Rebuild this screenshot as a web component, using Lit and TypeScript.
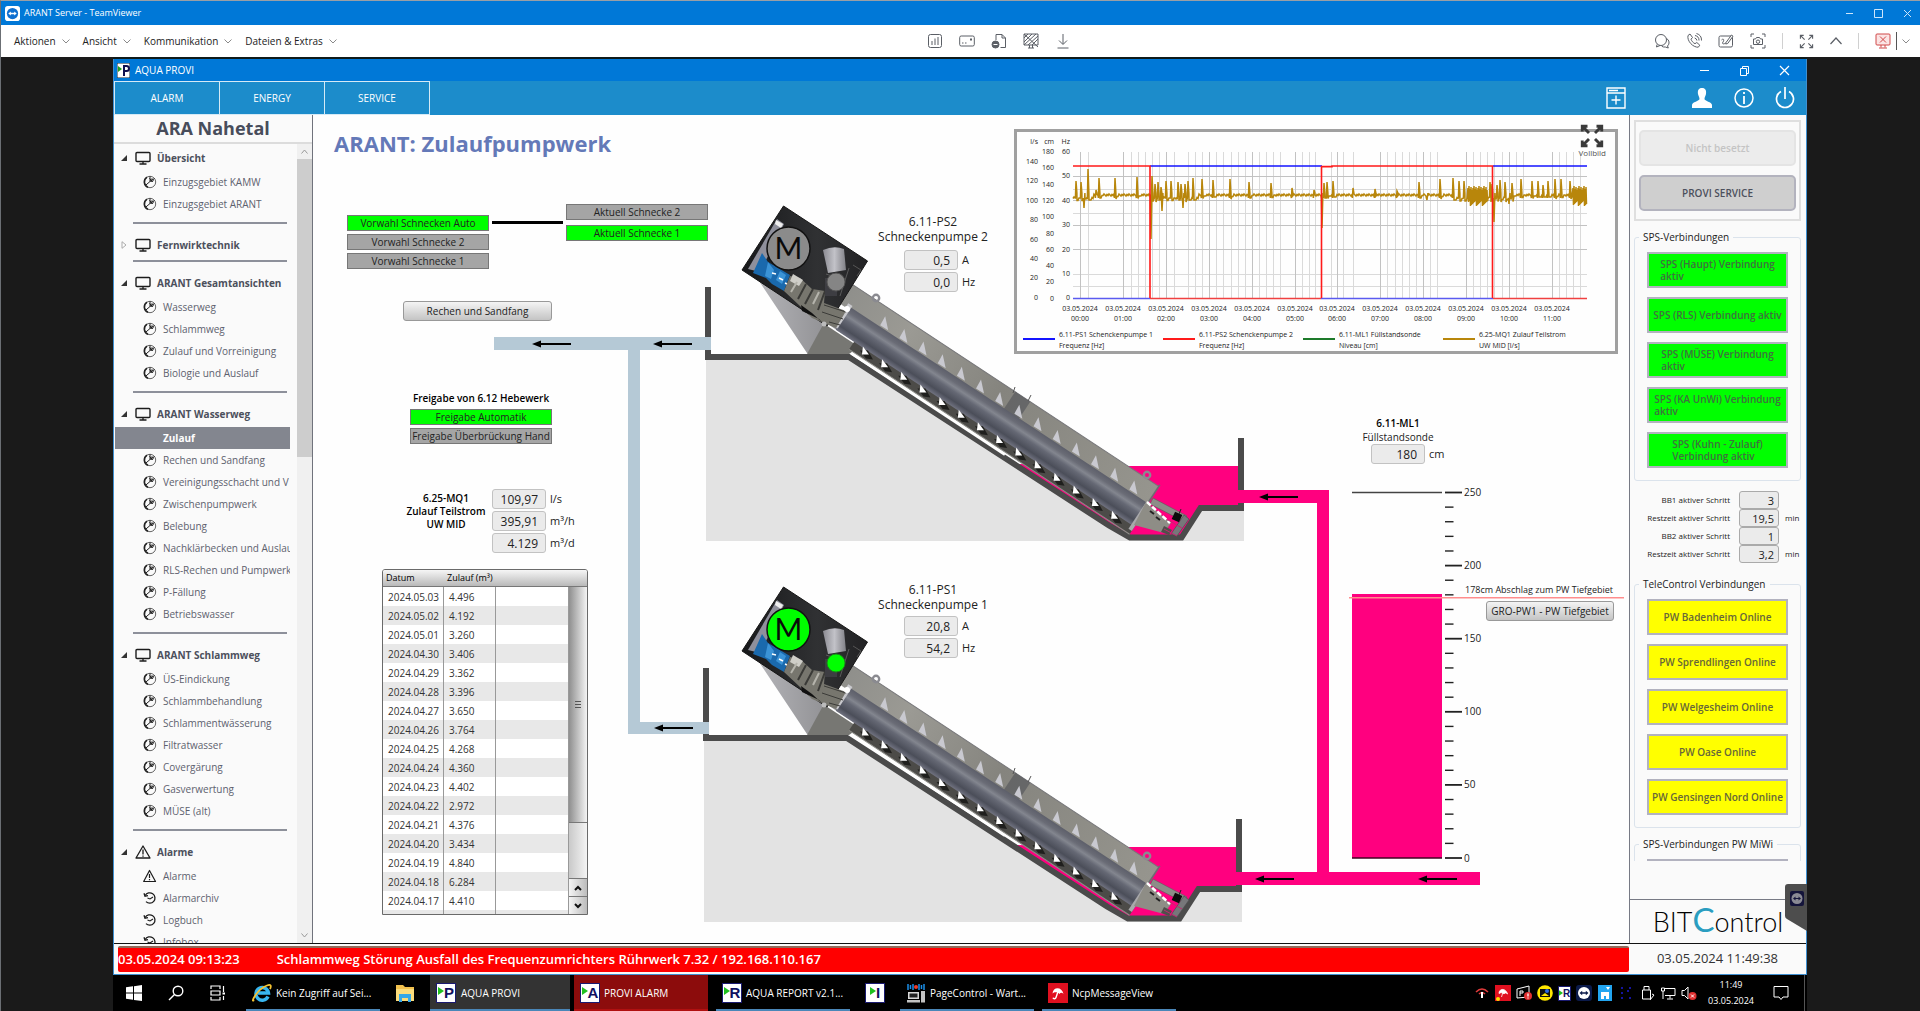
import { LitElement, html, css, svg, nothing } from "lit";
import { customElement, state } from "lit/decorators.js";
import { classMap } from "lit/directives/class-map.js";
import { styleMap } from "lit/directives/style-map.js";

/* ---------- icons ---------- */

const monitorIcon = html`<svg class="ico" width="16" height="14" viewBox="0 0 16 14" fill="none" stroke="#1c1c1c">
  <rect x="1" y="1.5" width="14" height="9" rx="1" stroke-width="1.4" /><path d="M8 10.5v2.5M4.500 13h7" stroke-width="1.300" /></svg>`;

const warnIcon = html`<svg class="ico" width="16" height="14" viewBox="0 0 16 14" fill="none" stroke="#1c1c1c" stroke-width="1.300" stroke-linejoin="round">
  <path d="M8 1L15 13H1Z" /><path d="M8 4.500v5M8 10.500v1.200" /></svg>`;

const warnSmall = html`<svg class="ico" width="14" height="14" viewBox="0 0 14 14" fill="none" stroke="#1c1c1c" stroke-width="1.200" stroke-linejoin="round">
  <path d="M6.500 1.500L12.500 12.500H.7Z" /><path d="M6.500 5v4M6.500 10v1.200" /></svg>`;

const pageIcon = html`<svg class="ico" width="14" height="14" viewBox="0 0 14 14" fill="none" stroke="#222">
  <circle cx="7" cy="7" r="5.700" stroke-width=".9" stroke="#555" />
  <path d="M4 2.200A5.700 5.700 0 0 0 5 12.300" stroke-width="1.600" />
  <path d="M7 1.300V6.500L2.300 10.500M7 6.500L11.500 3.500M6.500 3.300l3 3.600" stroke-width="1" />
  <circle cx="9" cy="5.200" r="1.300" stroke-width=".9" /></svg>`;

const historyIcon = html`<svg class="ico" width="14" height="14" viewBox="0 0 14 14" fill="none" stroke="#1c1c1c" stroke-width="1.300">
  <path d="M2.200 4.500A5.200 5.200 0 1 1 3 10.600" /><path d="M1 2.200l1 3 3-.6" /><path d="M4.500 7l2.500 1 3-2" stroke-width="1.100" /></svg>`;

const letterIcon = (letter: string) => html`<span class="letter"><svg width="6" height="8" viewBox="0 0 6 8"><path d="M0 0L6 4L0 8Z" fill="#1fc01f" /></svg><b>${letter}</b></span>`;

const chevron = html`<svg width="8" height="5" viewBox="0 0 8 5" fill="none" stroke="#8a8a8a"><path d="M.5.5L4 4L7.500.5" /></svg>`;

const tvMark = (size: number, bg: string, fg: string) => html`<svg width=${size} height=${size} viewBox="0 0 16 16">
  <rect width="16" height="16" rx="3" fill=${bg} /><circle cx="8" cy="8" r="6" fill=${fg} />
  <path d="M3.500 8L6.200 5.800V7.300H9.800V5.800L12.500 8L9.800 10.200V8.700H6.200V10.200Z" fill=${bg} /></svg>`;

const toolIcons = [
  { name: "Dashboard", art: svg`<rect x="1.500" y="1.500" width="13" height="13" rx="2" /><path d="M5 12V8M8 12V5.500M11 12V4" />` },
  { name: "Karte", art: svg`<rect x=".7" y="3" width="14.600" height="10" rx="1.500" /><path d="M3 10h1.500M6 10h1.500" /><path d="M11 6.500h2" stroke-width="2" />` },
  { name: "Dateiübertragung", art: svg`<path d="M5 7V1.500h6l3.500 3.500v9.500h-5" /><path d="M11 1.500V5h3.500" /><circle cx="4.500" cy="11.500" r="3.500" fill="#5b5f66" /><path d="M2.500 11.500h4" stroke="#fff" />` },
  { name: "Bildschirm schwärzen", art: svg`<path d="M1 1h14v11H1zM5 15h6M6.500 12v3M9.500 12v3M1 5l4-4M1 9l8-8M1 12L13 1M5 12L15 3M9 12l6-6M1 1l14 13" />` },
  { name: "Download", art: svg`<path d="M8 1v10M4 7.500L8 11.500L12 7.500M2.500 15h11" />` },
];

const rightIcons = [
  { name: "Chat", art: svg`<circle cx="7" cy="7" r="5.500" /><path d="M3 11.500L2.500 14L6 12.500M12.500 5.500a4.500 4.500 0 0 1 1 7.500l.8 2l-3-1a5 5 0 0 1-3.500-.7" />` },
  { name: "Anruf", art: svg`<path d="M2 2.500l2-1.500l2.500 3.500l-1.500 1.700c.7 2 2 3.400 4 4.500l1.800-1.200l3 2.700l-1.500 2C7 14.500.8 8 2 2.500zM9 2.500a5 5 0 0 1 4 5M10.500.5a7 7 0 0 1 5 7M8.700 5a3 3 0 0 1 2.200 2.500" />` },
  { name: "Whiteboard", art: svg`<rect x="1" y="3" width="13.500" height="11" rx="1.500" /><path d="M3.500 7c2-2 3 0 1.500 2s1 2.500 2.500 1M8 9.500L13.500 2l1.500 1.200L9.700 10.500L7.700 11z" fill="#fff" />` },
  { name: "Bildschirmfoto", art: svg`<path d="M1 4V1h3M12 1h3v3M15 12v3h-3M4 15H1v-3" /><path d="M3.500 6h2l1-1.500h3l1 1.500h2v5.500h-9z" /><circle cx="8" cy="8.700" r="1.700" />` },
];

const fullArrows = svg`<path d="M1.500 5V1.500H5M1.500 1.500L6 6M11 1.500h3.500V5M14.500 1.500L10 6M1.500 11v3.500H5M1.500 14.500L6 10M14.500 11v3.500H11M14.500 14.500L10 10" />`;

/* ---------- data ---------- */

interface Group { title: string; kind: "monitor" | "warn"; open: boolean; items: string[]; }

const GROUPS: Group[] = [
  { title: "Übersicht", kind: "monitor", open: true, items: ["Einzugsgebiet KAMW", "Einzugsgebiet ARANT"] },
  { title: "Fernwirktechnik", kind: "monitor", open: false, items: [] },
  { title: "ARANT Gesamtansichten", kind: "monitor", open: true, items: ["Wasserweg", "Schlammweg", "Zulauf und Vorreinigung", "Biologie und Auslauf"] },
  { title: "ARANT Wasserweg", kind: "monitor", open: true, items: ["Zulauf", "Rechen und Sandfang", "Vereinigungsschacht und V", "Zwischenpumpwerk", "Belebung", "Nachklärbecken und Auslauf", "RLS-Rechen und Pumpwerk", "P-Fällung", "Betriebswasser"] },
  { title: "ARANT Schlammweg", kind: "monitor", open: true, items: ["ÜS-Eindickung", "Schlammbehandlung", "Schlammentwässerung", "Filtratwasser", "Covergärung", "Gasverwertung", "MÜSE (alt)"] },
  { title: "Alarme", kind: "warn", open: true, items: ["Alarme", "Alarmarchiv", "Logbuch", "Infobox"] },
];

const INFLOW: [string, string][] = [
  ["2024.05.03", "4.496"], ["2024.05.02", "4.192"], ["2024.05.01", "3.260"], ["2024.04.30", "3.406"],
  ["2024.04.29", "3.362"], ["2024.04.28", "3.396"], ["2024.04.27", "3.650"], ["2024.04.26", "3.764"],
  ["2024.04.25", "4.268"], ["2024.04.24", "4.360"], ["2024.04.23", "4.402"], ["2024.04.22", "2.972"],
  ["2024.04.21", "4.376"], ["2024.04.20", "3.434"], ["2024.04.19", "4.840"], ["2024.04.18", "6.284"],
  ["2024.04.17", "4.410"],
];

const SPS = ["SPS (Haupt) Verbindung\naktiv", "SPS (RLS) Verbindung aktiv", "SPS (MÜSE) Verbindung\naktiv", "SPS (KA UnWi) Verbindung\naktiv", "SPS (Kuhn - Zulauf)\nVerbindung aktiv"];
const TELE = ["PW Badenheim Online", "PW Sprendlingen Online", "PW Welgesheim Online", "PW Oase Online", "PW Gensingen Nord Online"];
const STEPS = [
  { label: "BB1 aktiver Schritt", value: "3", unit: "" },
  { label: "Restzeit aktiver Schritt", value: "19,5", unit: "min" },
  { label: "BB2 aktiver Schritt", value: "1", unit: "" },
  { label: "Restzeit aktiver Schritt", value: "3,2", unit: "min" },
];

/* ---------- trend chart ---------- */

const PLOT = { left: 59, right: 573, top: 23, bottom: 169 };

/* [x, y] of the peaks and dips of the flow curve, inside the plot */
const FLOW: [number, number][] = [
  [62, 52], [67, 53], [70, 79], [74, 40], [82, 61], [85, 49], [101, 49], [123, 48], [137, 110], [138, 47], [141, 55],
  [144, 53], [147, 58], [148, 82], [152, 52], [157, 52], [164, 53], [167, 55], [169, 79], [171, 55], [174, 52], [179, 49],
  [188, 50], [199, 51], [216, 50], [235, 53], [257, 54], [278, 59], [300, 61], [308, 99], [310, 54], [313, 53], [319, 52],
  [339, 59], [361, 60], [383, 62], [405, 53], [413, 71], [426, 50], [439, 49], [445, 52], [450, 52], [476, 53], [478, 55],
  [480, 93], [483, 56], [486, 51], [491, 53], [495, 75], [498, 54], [507, 50], [518, 52], [524, 52], [529, 56], [534, 52], [541, 50],
  [547, 50], [556, 52],
];
const BUSY: [number, number][] = [[454, 473], [559, 573]];

function flowPath(): string {
  const base = 66;
  const marks = new Map(FLOW);
  const out: string[] = [];
  let tail = 0;
  for (let x = PLOT.left; x <= PLOT.right - 1; x++) {
    const wobble = ((x * 37) % 5) * 0.5 - 1;
    const busy = BUSY.some(([a, b]) => x >= a && x <= b);
    if (busy) {
      out.push(`${x} ${57 + ((x * 13) % 5)}`, `${x + 0.5} ${77 - ((x * 7) % 6)}`);
      continue;
    }
    const m = marks.get(x);
    if (m !== undefined) {
      out.push(`${x - 0.6} ${base + 3}`, `${x} ${m}`, `${x + 0.9} ${base - 2}`);
      tail = m < base - 8 ? 3 : 0;
    } else {
      const rough = (x < 80 || (x > 137 && x < 185) || (x > 439 && x < 500)) ? 3 : 0;
      out.push(`${x} ${base + wobble + tail + rough}`);
      tail = Math.max(0, tail - 1);
    }
  }
  return "M" + out.join("L");
}

@customElement("trend-chart")
export class TrendChart extends LitElement {
  static styles = css`
    :host { display: block; }
    .panel { position: relative; border: 3px solid #a0a0a0; background: #fefefe; }
    .plot { display: block; margin: -3px; }
    text { font: 7px "Open Sans", "Noto Sans", sans-serif; fill: #222; }
    .full { position: absolute; top: -8px; right: 9px; display: flex; flex-direction: column; align-items: center;
      border: 0; padding: 0; background: none; font: 8px/10px "Open Sans", "Noto Sans", sans-serif; color: #555; }
  `;

  render() {
    const major = Array.from({ length: 12 }, (_, i) => Math.round(66.3 + i * 42.85));
    const minor = [74, 117, 124, 131, 138, 145, 160, 174, 181, 188, 202, 209, 217, 224, 231, 245, 252, 259, 266, 288, 295, 301, 317, 329, 339,
      373, 381, 388, 395, 402, 416, 423, 459, 466, 473, 480, 488, 502, 509, 545, 552, 559, 566];
    const axis = (x: number, unit: string, values: number[], y0: number, step: number) => svg`
      <text x=${x} y="15" text-anchor="end">${unit}</text>
      ${values.map((v, i) => svg`<text x=${x} y=${y0 + i * step} text-anchor="end">${v}</text>`)}`;
    const legend: [string, string, string][] = [
      ["#1414ff", "6.11-PS1 Schenckenpumpe 1", "Frequenz [Hz]"],
      ["#ff1a1a", "6.11-PS2 Schenckenpumpe 2", "Frequenz [Hz]"],
      ["#1d7a2a", "6.11-ML1 Füllstandsonde", "Niveau [cm]"],
      ["#b8860b", "6.25-MQ1 Zulauf Teilstrom", "UW MID [l/s]"],
    ];
    return html`<div class="panel">
      <svg class="plot" width="604" height="225" viewBox="0 0 604 225" role="img" aria-label="Trend">
        <g stroke="#dadada">${minor.map((x) => svg`<path d="M${x}.5 23V169" />`)}</g>
        <g stroke="#dadada">${[60, 84, 145, 157].map((y) => svg`<path d="M59 ${y}.5H573" />`)}</g>
        <g stroke="#c2c2c2">${major.map((x) => svg`<path d="M${x}.5 23V169" />`)}
          ${[47, 71, 96, 120].map((y) => svg`<path d="M59 ${y}.5H573" />`)}</g>
        <path d=${flowPath()} fill="none" stroke="#b8860b" stroke-width="1.500" />
        <g fill="none" stroke-width="1.600">
          <path d="M59 169.500H136M307 169.500H479" stroke="#5a5af0" stroke-width="1.300" />
          <path d="M136 169.500H307M479 169.500H573" stroke="#f04040" stroke-width="1.300" />
          <path d="M136 37H308M479 37H573" stroke="#1414ff" />
          <path d="M59 37H136V169M307.500 169V37.600H318V37H478.500V169" stroke="#ff1a1a" />
        </g>
        ${axis(24, "l/s", [140, 120, 100, 80, 60, 40, 20, 0], 35, 19.4)}
        ${axis(40, "cm", [180, 160, 140, 120, 100, 80, 60, 40, 20, 0], 25, 16.3)}
        ${axis(56, "Hz", [60, 50, 40, 30, 20, 10, 0], 25, 24.4)}
        ${major.map((x, i) => svg`<text x=${x} y="182" text-anchor="middle">03.05.2024</text>
          <text x=${x} y="192" text-anchor="middle">${String(i).padStart(2, "0")}:00</text>`)}
        ${legend.map(([c, a, b], i) => svg`<path d="M${9 + i * 140} 210h32" stroke=${c} stroke-width="2" />
          <text x=${45 + i * 140} y="208">${a}</text><text x=${45 + i * 140} y="219">${b}</text>`)}
      </svg>
      <button class="full"><svg width="24" height="24" viewBox="0 0 16 16" fill="none" stroke="#3a3a3a" stroke-width="1.900">${fullArrows}</svg>Vollbild</button>
    </div>`;
  }
}

/* ---------- process diagram artwork ---------- */

const COS = 0.835;
const SIN = 0.55;
/* point on the screw axis frame (u along the tube, v across it) in scene units */
const at = (u: number, v: number): [number, number] => [850 + u * COS - v * SIN, 308 + u * SIN + v * COS];

const pit = (dx: number, dy: number) => svg`<g transform="translate(${dx} ${dy})">
  <path d="M706 358H849L1109 526L1129 538H1183L1202 509H1244V541H706Z" fill="#e3e3e3" />
  <path d="M1018 464L1128 466H1239V506H1199L1181 536H1129L1108 524Z" fill="#ff007f" />
  <path d="M708 287V357H849L1109 525.500L1130 537.500H1181.500L1200.500 508H1241V438" fill="none" stroke="#4b4b4b" stroke-width="6" />
</g>`;

const pump = (dy: number, on: boolean) => {
  const steps = Array.from({ length: 14 }, (_, i) => i);
  return svg`<g transform="translate(0 ${dy})">
    <path d="M757 278L807 353H849L860 320L823 320Z" fill="url(#plate)" />
    <path d="M824 323L807 354H849L862 345Z" fill="#777773" />
    <g transform="translate(850 308) rotate(33.400)">
      <rect x="-12" y="-21" width="368" height="23" fill="url(#trough)" />
      <path d="M-12 -21H356" stroke="#77777a" stroke-width="1" />
      <rect x="184" y="-21" width="18" height="21" fill="#55565a" opacity=".65" />
      <rect x="22" y="23" width="336" height="12" fill="#4c4b48" />
      <path d="M22 35H358" stroke="#8d8d88" stroke-width="1" />
      <path d="M-13 26.500H22" stroke="#fff" stroke-width="2" />
      <path d="M26 37.300H210" stroke="#fff" stroke-width="2.400" />
      <rect x="0" y="-1" width="357" height="27" fill="url(#tube)" />
      <rect x="-4" y="-3" width="5" height="27" fill="#c9c9cd" />
      <path d="M356 -23V0" stroke="#6d6d70" stroke-width="1.500" />
      <rect x="354" y="-2" width="4" height="33" fill="#a9a9ac" />
    </g>
    ${steps.map((i) => {
      const [x, y] = at(37 + i * 22.95, -6);
      const [a, b] = at(37 + i * 22.95, 29);
      return svg`<path d="M${x + 1} ${y - 7}L${x + 4} ${y + 7}L${x - 4} ${y + 2}Z" fill="#c9c9d0" />
        <path d="M${a - 5} ${b - 2}L${a + 1} ${b + 6}L${a + 8} ${b + 7}L${a + 3} ${b - 2}Z" fill="#1f1f1d" />
        <path d="M${a - 2} ${b - 6}L${a + 4} ${b + 2}L${a - 3} ${b + 2}Z" fill="#fff" />`;
    })}
    <path d="M1015 387L1013 393M1031 395L1028 401" stroke="#555" />
    <g fill="none" stroke="#8a8a90" stroke-width="2.400"><circle cx="876" cy="298" r="3.200" /><circle cx="1147" cy="475" r="3.200" /></g>
    <path d="M783.500 206L867.500 261L827 326L742 270Z" fill="url(#box)" stroke="#161616" />
    <path d="M777 219L784 224L760 272L748 269Z" fill="#8f909c" />
    <path d="M776 220l7 4l-2 4l-6-4z" fill="#eee" />
    <path d="M762 253L768 262L790 275L784 291L772 284L766 278L753 273Z" fill="#1a69ad" />
    <path d="M768 262l6 8l-3 9l-6-3zM780 271l6 4l-4 9l-6-4z" fill="#3b93d6" />
    <path d="M772 273l4 1M779 278l4 2M785 283l4 2" stroke="#fff" stroke-width="1.500" />
    <path d="M784 291L790 276L800 278L812 289L825 291L824 303L846 311L836 328L812 318L800 306Z" fill="#77766e" />
    <path d="M793 274l10 6l-4 6l-9-5z" fill="#cfcec8" />
    <path d="M806 284l-8 15M813 289l-8 15M825 291l-7 19" stroke="#3a3a37" stroke-width="2" />
    <path d="M797 282l-6 10M819 292l-6 12" stroke="#b5b4ac" stroke-width="2" />
    <path d="M801 305L812 313L826 326L819 319L802 311Z" fill="#111" />
    <path d="M824 305L846 312M822 312L843 319M829 322L840 325" stroke="#3b3b38" />
    <path d="M823 250Q834 245 844 249L846 270L828 273Z" fill="url(#can)" />
    <path d="M826 274l12 4M849 268l-9 28" stroke="#666" stroke-width=".8" />
    <path d="M825 278h12v18h-12z" fill="#3d3d42" />
    <path d="M853 265l8 5l-4 6" fill="none" stroke="#555" />
    <circle cx="836" cy="282" r="9" fill=${on ? "#00ff00" : "#858585"} stroke=${on ? "#1a8a1a" : "#555"} />
    <circle cx="788.500" cy="248.500" r="21.500" fill=${on ? "#00ff00" : "#8b8b8b"} stroke="#111" stroke-width="1.500" />
    <text x="788.500" y="259" class="motor">M</text>
    <circle cx="847" cy="309" r="3" fill="#fff" /><circle cx="824" cy="324" r="2.500" fill="#bbb" />
    <path d="M1153 498L1187 516L1183 521L1150 504Z" fill="#8d8d88" stroke="#5c5c5a" stroke-width=".6" />
    <path d="M1146 502L1171 523L1164 533L1134 525Z" fill="#8e8d86" />
    <path d="M1147 502L1170 523" stroke="#fff" stroke-width="2.500" stroke-dasharray="5 2" />
    <path d="M1150 511l4 3M1156 517l4 3" stroke="#222" stroke-width="2" />
    <path d="M1164 526l8 4l-3 5l-8-3z" fill="#504f4b" />
    <path d="M1184 515l5 4l-12 17l-6-2z" fill="#77777a" stroke="#4f4f52" stroke-width=".7" />
    <path d="M1168 520l14 8M1164 529l13 7" stroke="#c02a70" />
    <rect x="1173" y="513" width="8" height="8" fill="#0c0c0c" transform="rotate(25 1177 517)" /><path d="M1179 514l2-5" stroke="#222" />
  </g>`;
};

const arrow = (x: number, y: number) => svg`<path d="M${x} ${y}l9-3.500v7z" fill="#000" /><path d="M${x + 6} ${y}h33" stroke="#000" stroke-width="1.800" />`;

const scene = () => svg`
  <defs>
    <linearGradient id="tube" x1="0" y1="0" x2="0" y2="1"><stop offset="0" stop-color="#5d5f6a" /><stop offset=".2" stop-color="#6a6c76" /><stop offset=".35" stop-color="#83868f" /><stop offset=".5" stop-color="#656874" /><stop offset=".8" stop-color="#4b4e59" /><stop offset="1" stop-color="#707280" /></linearGradient>
    <linearGradient id="trough"><stop offset="0" stop-color="#8f8f8b" /><stop offset=".2" stop-color="#9b9a94" /><stop offset=".5" stop-color="#85847e" /><stop offset="1" stop-color="#96958e" /></linearGradient>
    <linearGradient id="plate"><stop offset="0" stop-color="#b4b4b8" /><stop offset="1" stop-color="#818184" /></linearGradient>
    <linearGradient id="box"><stop offset="0" stop-color="#17181a" /><stop offset=".6" stop-color="#303133" /><stop offset="1" stop-color="#222224" /></linearGradient>
    <linearGradient id="can"><stop offset="0" stop-color="#8b8b92" /><stop offset=".5" stop-color="#c2c2c8" /><stop offset="1" stop-color="#808086" /></linearGradient>
  </defs>
  ${pit(0, 0)}${pit(-2, 381)}
  <path d="M494 337H711V350H640V722H709V734H628V350H494Z" fill="#b5c9d6" />
  <path d="M1238 490H1329V872H1480V885H1236V872H1317V503H1238Z" fill="#ff007f" />
  ${pump(0, false)}${pump(381, true)}
  ${arrow(532, 344)}${arrow(653, 344)}${arrow(654, 728)}${arrow(1259, 497)}${arrow(1255, 879)}${arrow(1418, 879)}
  <path d="M492 222.500H563" stroke="#000" stroke-width="3" />
  <rect x="1352" y="594" width="90" height="264" fill="#ff007f" />
  <path d="M1352 858H1442" stroke="#400020" stroke-width="1.500" /><path d="M1352 492.500H1442" stroke="#444" stroke-width="1.500" />
  ${Array.from({ length: 26 }, (_, i) => {
    const y = 858 - i * 14.62;
    const big = i % 5 === 0;
    return svg`<path d="M1445 ${y}h${big ? 17 : 8.5}" stroke="#222" stroke-width=${big ? 1.8 : 1.4} />
      ${big ? svg`<text x="1464" y=${y + 3.5} class="tick">${i * 10}</text>` : nothing}`;
  })}
  <path d="M1349 597.700H1624" stroke="#ff8d8d" stroke-width="1.500" />
`;

/* ---------- application ---------- */

const place = (x: number, y: number) => styleMap({ left: `${x - 313}px`, top: `${y - 115}px` });

@customElement("app-root")
export class AppRoot extends LitElement {
  @state() private selected = "Zulauf";

  static styles = css`
    :host { display: block; font: 10px/14px "Open Sans", "Noto Sans", sans-serif; color: #222; }
    * { box-sizing: border-box; }
    button { font: inherit; color: inherit; border: 0; background: none; padding: 0; }
    a { color: inherit; text-decoration: none; }
    svg { flex: none; }
    .screen { height: 100vh; display: flex; flex-direction: column; background: #1a1a1a; border-top: 1px solid #9a9fa5; border-left: 1px solid #6b6f74; overflow: hidden; }

    .titlebar { display: flex; align-items: center; height: 24px; padding: 0 8px 0 4px; gap: 4px; background: #0078d7; color: #fff; font-size: 9px; }
    .titlebar .name { flex: 1; }
    .wins { display: flex; gap: 20px; }
    .menubar { display: flex; align-items: center; height: 32px; background: #fff; padding: 0 10px 0 13px; }
    .menus { flex: 1; display: flex; gap: 13px; }
    .menus button { display: flex; align-items: center; gap: 6px; }
    .tools { display: flex; gap: 16px; padding-left: 73px; }
    .actions { flex: 1; display: flex; justify-content: flex-end; align-items: center; gap: 16px; }
    .tools button, .actions button { display: flex; }
    .line { width: 1px; height: 16px; background: #d0d0d0; }
    .exit { display: flex; align-items: center; gap: 5px; }
    .exit .line { background: #555; height: 18px; }

    .desktop { position: relative; flex: 1; min-height: 0; margin: 0 113px 0 112px; display: flex; flex-direction: column; border-top: 2px solid #0e1a1a; }
    .window { flex: 1; min-height: 0; display: flex; flex-direction: column; border: 1px solid #3f8fd0; border-top: 0; background: #fefefe; }
    .apptitle { display: flex; align-items: center; height: 22px; gap: 5px; padding: 0 16px 0 3px; background: #0078d7; color: #fff; }
    .apptitle .name { flex: 1; }
    .apptitle .wins { gap: 29px; }
    .ribbon { display: flex; height: 34px; background: #1c8ccb; color: #fff; }
    .ribbon .tabs { display: flex; flex: 1; }
    .ribbon .tabs button { width: 106px; border: 1px solid #d5eaf6; margin-right: -1px; }
    .quick { display: flex; align-items: center; padding-right: 11px; gap: 20px; }
    .quick button { display: flex; }
    .quick .add { margin-right: 45px; }

    .body { flex: 1; min-height: 0; display: flex; }
    .side { width: 199px; flex: none; display: flex; flex-direction: column; background: #fafafa; border-right: 1px solid #70737c; color: #5d616e; }
    .side h1 { margin: 0; height: 29px; font-size: 18px; line-height: 27px; text-align: center; border-bottom: 2px solid #dcdcdc; color: #484d5b; }
    .sidebody { flex: 1; min-height: 0; display: flex; }
    .tree { flex: 1; min-width: 0; overflow: hidden; }
    .group { margin-top: 7px; }
    .group:first-child { margin-top: 0; }
    .ghead { display: flex; align-items: center; height: 27px; padding-left: 7px; font-weight: 700; color: #4c505c; width: 100%; }
    .ghead .tri { width: 14px; display: flex; }
    .ghead .ico { margin-right: 6px; }
    .tree ul { list-style: none; margin: 0; padding: 0; }
    .item { display: flex; align-items: center; height: 22px; padding-left: 29px; gap: 6px; margin-right: 7px; white-space: nowrap; overflow: hidden; }
    .item.on { background: #83868f; color: #fff; font-weight: 700; padding-left: 48px; margin-left: 1px; }
    .rule { border: 0; height: 2px; margin: 7px 10px 0 19px; background: #8d909a; }
    .group.closed .rule { margin-top: 2px; }
    .bar { width: 15px; display: flex; flex-direction: column; align-items: center; background: #f0f0f0; }
    .bar .thumb { width: 15px; height: 298px; background: #cdcdcd; }
    .bar svg { margin: 5px 0; }
    .bar .last { margin-top: auto; }

    .canvas { position: relative; flex: 1; min-width: 0; overflow: hidden; }
    .scene { position: absolute; left: 0; top: 0; }
    .motor { font-family: Lato, sans-serif; font-size: 30px; text-anchor: middle; fill: #0a0a0a; }
    .tick { font-size: 10px; fill: #222; }
    .at { position: absolute; }
    .canvas h2 { margin: 0; font-size: 22px; line-height: 28px; color: #6479b8; white-space: nowrap; }
    .tag { width: 142px; height: 16px; line-height: 14px; border: 1px solid #777; background: #a5a5a5; text-align: center; white-space: nowrap; }
    .tag.on { background: #00ff00; }
    .stack { display: flex; flex-direction: column; gap: 3px; }
    .stack.wide { gap: 5px; }
    .cmd { height: 20px; border: 1px solid #999; border-radius: 3px; background: linear-gradient(#f4f4f4, #c4c4c4); padding: 0 4px; white-space: nowrap; }
    .cmd.w { width: 149px; }
    .cmd.n { width: 128px; }
    .lab { text-align: center; white-space: nowrap; width: 150px; }
    .lab.big { font-size: 12px; line-height: 15px; }
    .lab.bold { font-weight: 600; color: #000; line-height: 13px; }
    .small { font-size: 8px; }
    .note { font-size: 9px; white-space: nowrap; }
    .fields { display: flex; flex-direction: column; gap: 2px; }
    .field { display: flex; align-items: center; gap: 4px; }
    .field input { width: 54px; height: 20px; padding: 0 7px; text-align: right; font: 12px "Open Sans", "Noto Sans", sans-serif; color: #222; border: 1px solid #c2c2c2; border-radius: 3px; background: #ebebeb; }
    .field label { font-size: 11px; }

    .grid { width: 206px; border: 1px solid #6a6a6a; border-radius: 3px 3px 0 0; height: 346px; overflow: hidden; background: #fff; }
    .gwrap { display: flex; align-items: flex-start; }
    .data { border-collapse: separate; border-spacing: 0; table-layout: fixed; width: 186px; }
    .data th { height: 17px; padding: 0 0 0 3px; font-weight: 400; font-size: 9px; line-height: 16px; text-align: left; background: linear-gradient(#f6f6f6, #b9b9b9); border-bottom: 1px solid #777; color: #000; white-space: nowrap; }
    .data td { height: 19px; padding: 0 0 0 5px; line-height: 18px; border-right: 1px solid #999; color: #333; }
    .data tbody tr:nth-child(even) { background: #e8e8e8; }
    .c1 { width: 61px; } .c2 { width: 52px; }
    .gbar { flex: 1; height: 344px; display: flex; flex-direction: column; }
    .gbar .cap { height: 17px; background: linear-gradient(#f6f6f6, #b9b9b9); border-bottom: 1px solid #777; }
    .gbar .gthumb { flex: 1; display: flex; align-items: center; justify-content: center; background: linear-gradient(90deg, #8f8f8f, #f4f4f4); border-bottom: 1px solid #777; }
    .gbar .rest { height: 55px; background: linear-gradient(90deg, #c9c9c9, #f4f4f4); }
    .gbar button { height: 18px; border-top: 1px solid #777; background: linear-gradient(90deg, #f4f4f4, #bcbcbc); display: flex; align-items: center; justify-content: center; }

    .right { width: 177px; flex: none; display: flex; flex-direction: column; background: #fafafa; border-left: 1px solid #777a85; }
    .scroll { flex: 1; min-height: 0; overflow: hidden; padding: 5px 5px 0 4px; margin-bottom: 38px; }
    .users { border: 2px solid #dfdfdf; padding: 8px 3px; display: flex; flex-direction: column; gap: 9px; }
    .users button { height: 36px; border: 2px solid #b3b3be; border-radius: 5px; background: #cfcfcf; font-weight: 600; color: #4c505c; }
    .users button:disabled { background: #ececec; border-color: #e4e4e4; color: #c4c4c4; }
    fieldset { margin: 9px 0 0; padding: 8px 12px 12px; border: 1px solid #dbe3ec; border-radius: 3px; min-width: 0; display: flex; flex-direction: column; gap: 9px; }
    legend { padding: 0 4px; margin-left: -8px; height: 14px; }
    .state { height: 36px; display: flex; align-items: center; justify-content: center; border: 2px solid #b2b2bf; background: #00ff00; color: #3f713f; font-weight: 600; line-height: 12px; text-align: left; white-space: pre; }
    .state.tele { background: #ffff00; color: #66663a; }
    .steps { margin-top: 10px; margin-bottom: 14px; }
    .step { display: flex; align-items: center; height: 18px; font-size: 8px; white-space: nowrap; }
    .step label { flex: 1; text-align: right; padding-right: 9px; }
    .step input { width: 40px; height: 18px; padding: 0 4px; text-align: right; font: 11px "Open Sans", "Noto Sans", sans-serif; border: 1px solid #aaa; border-radius: 3px; background: #ebebeb; color: #222; }
    .step span { width: 22px; padding-left: 6px; }
    .brand { height: 44px; border-top: 1px solid #777a85; display: flex; align-items: baseline; justify-content: center; font: 300 27px/38px Lato, "Open Sans", sans-serif; color: #000; }
    .brand b { font-weight: 400; font-size: 33px; color: #2a9dc0; }

    .foot { display: flex; height: 31px; border-top: 1px solid #111; background: #fafafa; font-size: 13px; }
    .alarm { flex: 1; margin: 2px 0 2px 4px; padding-bottom: 3px; display: flex; align-items: center; gap: 37px; background: #ff0000; border-top: 2px solid #8f6a5a; border-radius: 2px; color: #fff; font-weight: 600; white-space: nowrap; }
    .now { width: 177px; padding-bottom: 2px; display: flex; align-items: center; justify-content: center; color: #333; }

    .taskbar { display: flex; height: 36px; background: #000; color: #fff; align-items: stretch; }
    .sys { width: 42px; display: flex; align-items: center; justify-content: center; }
    .sys + .task { margin-left: 7px; }
    .task { width: 134px; display: flex; align-items: center; gap: 4px; padding-left: 6px; box-shadow: inset 0 -2px #4a86b8; margin-right: 8px; white-space: nowrap; }
    .task.slim { width: 42px; box-shadow: none; padding-left: 7px; margin-right: 0; }
    .task.active { background: #333; width: 140px; margin-right: 4px; gap: 5px; }
    .task.red { background: #8c0c0c; box-shadow: inset 0 -2px #b01010; }
    .letter { display: inline-flex; width: 20px; height: 20px; background: #fff; border: 1px solid #1a1a70; color: #101060; align-items: flex-start; justify-content: center; }
    .letter b { font: 700 15px/18px "Liberation Sans", sans-serif; }
    .letter svg { margin-top: 3px; }
    .letter.mini { width: 13px; height: 15px; }
    .letter.mini b { font-size: 10px; line-height: 14px; }
    .tray { margin-left: auto; display: flex; align-items: center; gap: 5px; }
    .clock { text-align: center; line-height: 16px; margin: 0 14px 0 6px; font-size: 9px; }
    .edge { width: 3px; height: 36px; margin-left: 10px; border-left: 1px solid #555; }
    .handle { position: absolute; right: 0; bottom: 80px; display: flex; }
  `;

  private tag(text: string, on = false) {
    return html`<div class=${classMap({ tag: true, on })}>${text}</div>`;
  }

  private field(id: string, value: string, unit: string) {
    return html`<div class="field"><input id=${id} readonly .value=${value} /><label for=${id}>${unit}</label></div>`;
  }

  private renderSide() {
    return html`<nav class="side">
      <h1>ARA Nahetal</h1>
      <div class="sidebody">
        <div class="tree">
          ${GROUPS.map((g, gi) => html`<section class=${classMap({ group: true, closed: !g.open })}>
            <button class="ghead">
              <span class="tri">${g.open
                ? html`<svg width="6" height="6" viewBox="0 0 6 6"><path d="M6 0V6H0Z" fill="#333" /></svg>`
                : html`<svg width="6" height="8" viewBox="0 0 6 8"><path d="M1 .7L5 4L1 7.300Z" fill="#fff" stroke="#aaa" /></svg>`}</span>
              ${g.kind === "warn" ? warnIcon : monitorIcon}${g.title}</button>
            <ul>${g.items.map((t, i) => {
              const on = t === this.selected;
              const icon = g.kind === "warn" ? (i === 0 ? warnSmall : historyIcon) : pageIcon;
              return html`<li><a href="#" class=${classMap({ item: true, on })} @click=${(e: Event) => { e.preventDefault(); this.selected = t; }}>${on ? nothing : icon}${t}</a></li>`;
            })}</ul>
            ${gi < GROUPS.length - 1 ? html`<hr class="rule" />` : nothing}
          </section>`)}
        </div>
        <div class="bar">
          <svg width="7" height="5" viewBox="0 0 7 5" fill="none" stroke="#999"><path d="M.5 4.500L3.500 1L6.500 4.500" /></svg>
          <div class="thumb"></div>
          <svg class="last" width="7" height="5" viewBox="0 0 7 5" fill="none" stroke="#999"><path d="M.5.5L3.500 4L6.500.5" /></svg>
        </div>
      </div>
    </nav>`;
  }

  private renderTable() {
    return html`<div class="at grid" style=${place(382, 569)}><div class="gwrap">
      <table class="data">
        <colgroup><col class="c1" /><col class="c2" /><col /></colgroup>
        <thead><tr><th>Datum</th><th>Zulauf (m³)</th><th></th></tr></thead>
        <tbody>${INFLOW.map(([d, v]) => html`<tr><td>${d}</td><td>${v}</td><td></td></tr>`)}<tr><td></td><td></td><td></td></tr></tbody>
      </table>
      <div class="gbar"><div class="cap"></div>
        <div class="gthumb"><svg width="6" height="7" viewBox="0 0 6 7"><path d="M0 .5h6M0 3.500h6M0 6.500h6" stroke="#555" /></svg></div>
        <div class="rest"></div>
        <button aria-label="Nach oben"><svg width="8" height="6" viewBox="0 0 8 6" fill="none" stroke="#111" stroke-width="2"><path d="M1 5L4 2L7 5" /></svg></button>
        <button aria-label="Nach unten"><svg width="8" height="6" viewBox="0 0 8 6" fill="none" stroke="#111" stroke-width="2"><path d="M1 1L4 4L7 1" /></svg></button>
      </div>
    </div></div>`;
  }

  private renderCanvas() {
    return html`<main class="canvas">
      <svg class="scene" width="1317" height="828" viewBox="313 115 1317 828">${scene()}</svg>
      <h2 class="at" style=${place(334, 129)}>ARANT: Zulaufpumpwerk</h2>
      <div class="at stack" style=${place(347, 215)}>${this.tag("Vorwahl Schnecken Auto", true)}${this.tag("Vorwahl Schnecke 2")}${this.tag("Vorwahl Schnecke 1")}</div>
      <div class="at stack wide" style=${place(566, 204)}>${this.tag("Aktuell Schnecke 2")}${this.tag("Aktuell Schnecke 1", true)}</div>
      <button class="at cmd w" style=${place(403, 301)}>Rechen und Sandfang</button>
      <div class="at lab bold" style=${place(406, 392)}>Freigabe von 6.12 Hebewerk</div>
      <div class="at stack" style=${place(410, 409)}>${this.tag("Freigabe Automatik", true)}${this.tag("Freigabe Überbrückung Hand")}</div>
      <div class="at lab bold" style=${place(371, 492)}>6.25-MQ1<br />Zulauf Teilstrom<br />UW MID</div>
      <div class="at fields" style=${place(492, 489)}>${this.field("ls", "109,97", "l/s")}${this.field("mh", "395,91", "m³/h")}${this.field("md", "4.129", "m³/d")}</div>
      ${this.renderTable()}
      <div class="at lab big" style=${place(858, 214)}>6.11-PS2<br />Schneckenpumpe 2</div>
      <div class="at fields" style=${place(904, 250)}>${this.field("a2", "0,5", "A")}${this.field("h2", "0,0", "Hz")}</div>
      <div class="at lab big" style=${place(858, 582)}>6.11-PS1<br />Schneckenpumpe 1</div>
      <div class="at fields" style=${place(904, 616)}>${this.field("a1", "20,8", "A")}${this.field("h1", "54,2", "Hz")}</div>
      <trend-chart class="at" style=${place(1014, 129)}></trend-chart>
      <div class="at lab bold" style=${place(1323, 417)}>6.11-ML1</div>
      <div class="at lab" style=${place(1323, 430)}>Füllstandsonde</div>
      <div class="at fields" style=${place(1371, 444)}>${this.field("cm", "180", "cm")}</div>
      <div class="at note" style=${place(1465, 583)}>178cm Abschlag zum PW Tiefgebiet</div>
      <button class="at cmd n" style=${place(1486, 601)}>GRO-PW1 - PW Tiefgebiet</button>
    </main>`;
  }

  private renderRight() {
    return html`<aside class="right">
      <div class="scroll">
        <div class="users"><button disabled>Nicht besetzt</button><button>PROVI SERVICE</button></div>
        <fieldset><legend>SPS-Verbindungen</legend>${SPS.map((t) => html`<button class="state">${t}</button>`)}</fieldset>
        <div class="steps">${STEPS.map((s, i) => html`<div class="step"><label for="s${i}">${s.label}</label><input id="s${i}" readonly .value=${s.value} /><span>${s.unit}</span></div>`)}</div>
        <fieldset><legend>TeleControl Verbindungen</legend>${TELE.map((t) => html`<button class="state tele">${t}</button>`)}</fieldset>
        <fieldset><legend>SPS-Verbindungen PW MiWi</legend><button class="state" aria-label="PW MiWi"></button></fieldset>
      </div>
      <div class="brand">BIT<b>C</b>ontrol</div>
    </aside>`;
  }

  private renderTaskbar() {
    const w = "#fff";
    return html`<footer class="taskbar">
      <button class="sys" aria-label="Start"><svg width="16" height="16" viewBox="0 0 16 16"><path d="M0 2.300L7 1.300V7.600H0zM8 1.200L16 0V7.600H8zM0 8.500H7V14.800L0 13.800zM8 8.500H16V16L8 14.900z" fill=${w} /></svg></button>
      <button class="sys" aria-label="Suche"><svg width="16" height="16" viewBox="0 0 16 16" fill="none" stroke=${w} stroke-width="1.400"><circle cx="10" cy="6" r="4.800" /><path d="M6.500 9.500L1 15" /></svg></button>
      <button class="sys" aria-label="Aufgabenansicht"><svg width="16" height="16" viewBox="0 0 16 16" fill="none" stroke=${w} stroke-width="1.200"><path d="M1 4V1h9v3M1 12v3h9v-3M1 6h9v4H1zM13.500 1v6M13.500 11v4" /><path d="M12.500 8.500h2.500" stroke-width="2" /></svg></button>
      <button class="task"><svg width="20" height="20" viewBox="0 0 20 20" fill="none"><path d="M16 13.500A6.300 6.300 0 1 1 16.500 10H6" stroke="#38b6f0" stroke-width="3.400" /><path d="M2 17C-2 21 5 6 15 2.500c4-1.500 4.500.5 3 3.500" stroke="#f5c332" stroke-width="1.800" /></svg>Kein Zugriff auf Sei...</button>
      <button class="task slim" aria-label="Explorer"><svg width="20" height="20" viewBox="0 0 20 20"><path d="M1 2h7l2 2h9v14H1z" fill="#f2c14e" /><path d="M1 6h18v12H1z" fill="#fbdc7c" /><path d="M4 19v-8h12v8h-3v-4H7v4z" fill="#35a7e8" /></svg></button>
      <button class="task active">${letterIcon("P")}AQUA PROVI</button>
      <button class="task red">${letterIcon("A")}PROVI ALARM</button>
      <button class="task">${letterIcon("R")}AQUA REPORT v2.1...</button>
      <button class="task slim" aria-label="AQUA INFO">${letterIcon("I")}</button>
      <button class="task"><svg width="20" height="20" viewBox="0 0 20 20"><path d="M2 1v6M4.500 2v4M7 1v6M13 1v6M15.500 2v4M18 1v6" stroke="#1b8fe8" stroke-width="1.500" /><circle cx="10" cy="4" r="2" fill="#f03a2a" /><path d="M2 9h11v7H2z" fill="#d9d9d9" /><path d="M3.500 10.500h8v4h-8z" fill="#222" /><path d="M1 17h13v2.500H1zM15 8h4v11.500h-4z" fill="#c2c2c2" /></svg>PageControl - Wart...</button>
      <button class="task"><svg width="20" height="20" viewBox="0 0 20 20"><path d="M0 0h20v20H0z" fill="#e01020" /><path d="M4.500 10.500C5 3.500 14 3.500 15.500 11c-1.500-1.800-3-1.800-4 0c-1.500-2-5-2.500-7-.5z" fill="#fff" /><path d="M10 8.500L8 14.500c-.5 1.500-2.500 1.700-3 .3" fill="none" stroke="#fff" stroke-width="1.400" /></svg>NcpMessageView</button>
      <div class="tray">
        <svg width="16" height="16" viewBox="0 0 16 16" fill="none"><path d="M2 7q6-6 12 0M5 9q3-3 6 0" stroke="#e03a3a" stroke-width="1.500" /><path d="M8 7v6" stroke="#fff" stroke-width="2" /></svg>
        <svg width="16" height="16" viewBox="0 0 16 16"><path d="M0 0h16v16H0z" fill="#e01020" /><path d="M4 8.500C4 3 11 3 12.500 9c-1.500-1.500-2.500-1.500-3.500 0C8 7.500 5.500 7.300 4 8.500zM8 7L6.500 12" fill="#fff" stroke="#fff" stroke-width=".8" /><circle cx="3" cy="14" r="2" fill="#ffe000" /></svg>
        <svg width="16" height="16" viewBox="0 0 16 16" fill="none"><path d="M1 4L13 1v11L1 13z" stroke="#fff" /><path d="M4 11V6h3v2H4" stroke="#fff" /><circle cx="12" cy="11" r="4" fill="#e03030" /><path d="M12 8.500v3M12 12.500v1" stroke="#fff" stroke-width="1.300" /></svg>
        <svg width="16" height="16" viewBox="0 0 16 16"><circle cx="8" cy="8" r="7.800" fill="#ffe600" /><path d="M3 4h10v8H3z" fill="#111" /><circle cx="10" cy="6" r="2" fill="#2a6ae8" /><path d="M4 11l4-3l4 3z" fill="#ffe600" /></svg>
        <span class="letter mini"><svg width="4" height="6" viewBox="0 0 6 8"><path d="M0 0L6 4L0 8Z" fill="#1fc01f" /></svg><b>R</b></span>
        ${tvMark(16, "#0b1a4a", "#fff")}
        <svg width="16" height="16" viewBox="0 0 16 16"><path d="M1 0h14v16H1z" fill="#22a5f0" /><path d="M4 14V7h8v7h-3v-3H7v3zM9 2h4l-2 3z" fill="#fff" /></svg>
        <svg width="16" height="16" viewBox="0 0 16 16" fill="none" stroke="#1414a0" stroke-width="2"><path d="M3 3h2M11 3h2M3 8h2M3 13h2M11 13h2M9 6h2" /></svg>
        <svg width="16" height="16" viewBox="0 0 16 16" fill="none" stroke="#fff"><path d="M5 5V1.500h5V5M3.500 5h8v9h-8zM13 9l2 1l-4 5" /></svg>
        <svg width="16" height="16" viewBox="0 0 16 16" fill="none" stroke="#fff"><path d="M5 3.500h10v7H5M10 10.500v3M7 14h6M1.500 3v3h3V3zM3 6v8" /></svg>
        <svg width="16" height="16" viewBox="0 0 16 16" fill="none"><path d="M1 5.500h2.500L7 2v12L3.500 10.500H1z" stroke="#fff" /><circle cx="11.500" cy="11" r="4" fill="#e03030" /><path d="M10 9.500l3 3M13 9.500l-3 3" stroke="#fff" /></svg>
        <div class="clock">11:49<br />03.05.2024</div>
        <svg width="16" height="16" viewBox="0 0 16 16" fill="none" stroke="#fff"><path d="M1 1.500h14v10.500H10L8 14.500L6 12H1z" /></svg>
        <span class="edge"></span>
      </div>
    </footer>`;
  }

  render() {
    return html`<div class="screen">
      <header class="titlebar">${tvMark(15, "#fff", "#0e6fd0")}<span class="name">ARANT Server - TeamViewer</span>
        <span class="wins">
          <svg width="9" height="9" viewBox="0 0 9 9" stroke="#cfe6fa"><path d="M1 4.500h7" /></svg>
          <svg width="9" height="9" viewBox="0 0 9 9" fill="none" stroke="#cfe6fa"><path d="M.5.5h8v8h-8z" /></svg>
          <svg width="9" height="9" viewBox="0 0 9 9" stroke="#cfe6fa"><path d="M1 1l7 7M8 1L1 8" /></svg>
        </span>
      </header>
      <div class="menubar">
        <nav class="menus">${["Aktionen", "Ansicht", "Kommunikation", "Dateien & Extras"].map((t) => html`<button>${t}${chevron}</button>`)}</nav>
        <div class="tools">${toolIcons.map((i) => html`<button aria-label=${i.name}><svg width="16" height="16" viewBox="0 0 16 16" fill="none" stroke="#5b5f66">${i.art}</svg></button>`)}</div>
        <div class="actions">
          ${rightIcons.map((i) => html`<button aria-label=${i.name}><svg width="16" height="16" viewBox="0 0 16 16" fill="none" stroke="#5b5f66">${i.art}</svg></button>`)}
          <span class="line"></span>
          <button aria-label="Vollbild"><svg width="15" height="15" viewBox="0 0 16 16" fill="none" stroke="#5b5f66" stroke-width="1.200">${fullArrows}</svg></button>
          <button aria-label="Einklappen"><svg width="12" height="8" viewBox="0 0 12 8" fill="none" stroke="#5b5f66" stroke-width="1.200"><path d="M.5 7L6 1L11.500 7" /></svg></button>
          <span class="line"></span>
          <div class="exit"><button aria-label="Beenden"><svg width="16" height="16" viewBox="0 0 16 16" fill="#fbe4e4" stroke="#d04848"><rect x="1" y="1" width="14" height="11" rx="1" /><path d="M5 3.500l6 6M11 3.500l-6 6M6 12v2.500M10 12v2.500M4 15h8" /></svg></button><span class="line"></span>${chevron}</div>
        </div>
      </div>
      <div class="desktop">
        <div class="window">
          <header class="apptitle"><svg width="13" height="15" viewBox="0 0 13 15"><path d="M0 0h13v15H0z" fill="#fff" stroke="#123" /><path d="M1 3l4 3l-4 3z" fill="#1fa01f" /><path d="M7 13V3h2.500a2.500 2.500 0 0 1 0 5H7" fill="none" stroke="#101050" stroke-width="2" /></svg>
            <span class="name">AQUA PROVI</span>
            <span class="wins">
              <svg width="11" height="11" viewBox="0 0 11 11" stroke="#fff"><path d="M1 5.500h9" /></svg>
              <svg width="11" height="11" viewBox="0 0 11 11" fill="none" stroke="#fff"><path d="M1.500 3.500h6v7h-6zM3.500 3.500v-2h6v7h-2" /></svg>
              <svg width="11" height="11" viewBox="0 0 11 11" stroke="#fff" stroke-width="1.200"><path d="M1 1l9 9M10 1L1 10" /></svg>
            </span>
          </header>
          <div class="ribbon">
            <div class="tabs"><button>ALARM</button><button>ENERGY</button><button>SERVICE</button></div>
            <div class="quick">
              <button class="add" aria-label="Hinzufügen"><svg width="20" height="22" viewBox="0 0 20 22" fill="none" stroke="#fff" stroke-width="1.400"><path d="M1 1h18v20H1zM1 6h18M10 8.500v9M5.500 13h9M3 3.500h9" /></svg></button>
              <button aria-label="Benutzer"><svg width="22" height="22" viewBox="0 0 22 22"><path d="M11 1c3.500 0 4.500 2.500 4 6c-.3 2-1.500 3-1.500 5c0 2 7.500 3 7.500 6v3H1v-3c0-3 7.500-4 7.500-6c0-2-1.200-3-1.500-5c-.5-3.500.5-6 4-6z" fill="#fff" /></svg></button>
              <button aria-label="Info"><svg width="22" height="22" viewBox="0 0 22 22" fill="none" stroke="#fff" stroke-width="1.500"><circle cx="11" cy="11" r="9" /><path d="M11 9v8M11 5v2" stroke-width="1.800" /></svg></button>
              <button aria-label="Beenden"><svg width="20" height="24" viewBox="0 0 20 24" fill="none" stroke="#fff" stroke-width="1.700"><path d="M6 5.500A8.500 8.500 0 1 0 14 5.500M10 1v12" /></svg></button>
            </div>
          </div>
          <div class="body">${this.renderSide()}${this.renderCanvas()}${this.renderRight()}</div>
          <div class="foot"><div class="alarm"><span>03.05.2024 09:13:23</span><span>Schlammweg Störung Ausfall des Frequenzumrichters Rührwerk 7.32 / 192.168.110.167</span></div><div class="now">03.05.2024 11:49:38</div></div>
        </div>
        ${this.renderTaskbar()}
        <button class="handle" aria-label="TeamViewer"><svg width="22" height="47" viewBox="0 0 22 47"><path d="M3 0H22V47L2 35Q0 34 0 32V3Q0 0 3 0Z" fill="#4d4d4d" /><rect x="5" y="7" width="14" height="15" rx="2" fill="#14143a" /><circle cx="12" cy="14.500" r="5.500" fill="#8a8a94" /><path d="M8 14.500l2.500-2v1.400h3v-1.400l2.500 2l-2.500 2v-1.400h-3v1.400z" fill="#14143a" /></svg></button>
      </div>
    </div>`;
  }
}
